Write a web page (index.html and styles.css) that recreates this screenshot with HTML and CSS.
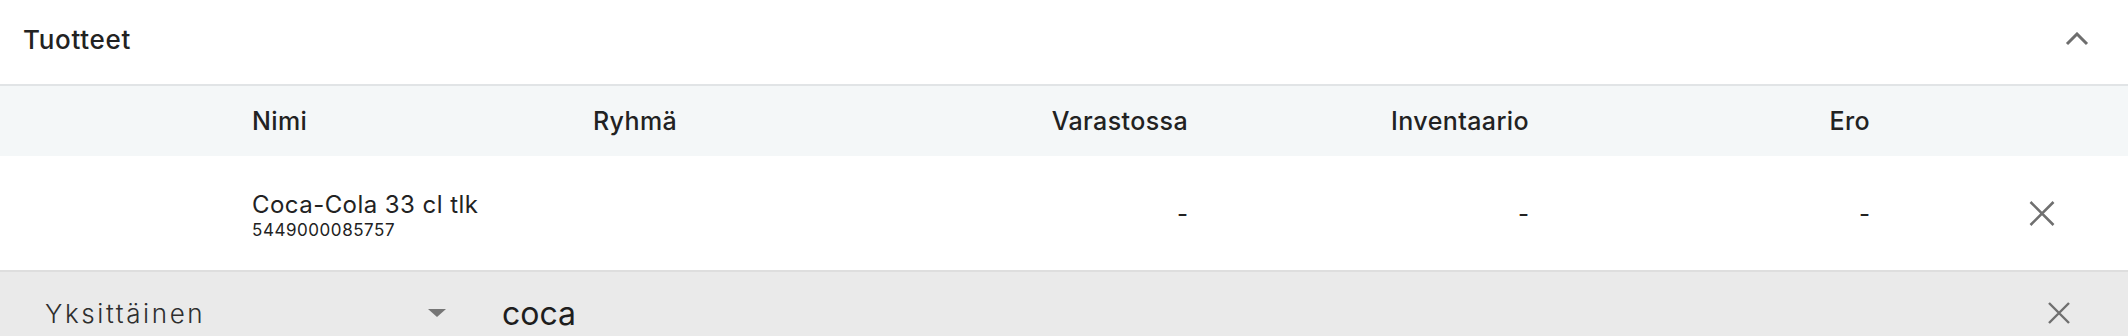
FILE: index.html
```html
<!DOCTYPE html>
<html lang="fi">
<head>
<meta charset="utf-8">
<title>Tuotteet</title>
<link rel="stylesheet" href="styles.css">
</head>
<body>
<div class="panel">
  <div class="panel-head">
    <span class="title">Tuotteet</span>
    <svg class="chev" width="24" height="14" viewBox="0 0 24 14"><polyline points="2,12 12,2 22,12" fill="none" stroke="#6e6e6e" stroke-width="3"/></svg>
  </div>
  <div class="grid thead">
    <div></div>
    <div class="cell">Nimi</div>
    <div class="cell">Ryhmä</div>
    <div class="cell num">Varastossa</div>
    <div class="cell num">Inventaario</div>
    <div class="cell num">Ero</div>
    <div></div>
  </div>
  <div class="grid trow">
    <div></div>
    <div class="cell name">
      <div class="pname">Coca-Cola 33 cl tlk</div>
      <div class="code">5449000085757</div>
    </div>
    <div class="cell"></div>
    <div class="cell num val">-</div>
    <div class="cell num val">-</div>
    <div class="cell num val">-</div>
    <div class="act">
      <svg width="26" height="25" viewBox="0 0 26 25"><path d="M1.5 1 L24.5 24 M24.5 1 L1.5 24" stroke="#6f6f6f" stroke-width="2.6" fill="none"/></svg>
    </div>
  </div>
  <div class="search">
    <div class="select">
      <span class="sel-text">Yksittäinen</span>
      <svg class="tri" width="18" height="8" viewBox="0 0 18 8"><polygon points="0,0 18,0 9,8" fill="#767676"/></svg>
    </div>
    <div class="input">coca</div>
    <svg class="clear" width="22" height="22" viewBox="0 0 22 22"><path d="M1 1 L21 21 M21 1 L1 21" stroke="#6f6f6f" stroke-width="2.4" fill="none"/></svg>
  </div>
</div>
</body>
</html>
```

FILE: styles.css
```css
html, body {
  margin: 0;
  padding: 0;
  background: #ffffff;
}
body {
  font-family: "Inter", "DejaVu Sans", sans-serif;
  color: #222222;
  overflow: hidden;
}
.panel {
  display: flex;
  flex-direction: column;
}
.panel-head {
  height: 84px;
  border-bottom: 2px solid #e1e4e6;
  display: flex;
  align-items: center;
  justify-content: space-between;
  padding: 0 39px 0 23px;
}
.title {
  font-size: 26px;
  font-weight: 500;
  letter-spacing: 0.7px;
  margin-top: -5px;
}
.chev {
  display: block;
  margin-top: -6px;
}
.grid {
  display: grid;
  grid-template-columns: 252px repeat(5, 341px) 1fr;
  align-items: center;
}
.thead {
  height: 70px;
  background: #f4f7f8;
  font-size: 25px;
  font-weight: 500;
  letter-spacing: 0.4px;
}
.cell.num {
  text-align: right;
  padding-right: 87px;
}
.trow {
  height: 114px;
  border-bottom: 2px solid #dedede;
  background: #ffffff;
}
.pname {
  font-size: 24px;
  font-weight: 400;
  line-height: 28px;
  letter-spacing: 0.45px;
}
.code {
  font-size: 17px;
  line-height: 22px;
  letter-spacing: 0.55px;
}
.name {
  margin-top: 5px;
}
.val {
  font-size: 24px;
}
.act {
  display: flex;
  justify-content: center;
  padding-right: 2px;
}
.act svg {
  display: block;
}
.search {
  height: 82px;
  background: #eaeaea;
  display: flex;
  align-items: center;
  padding: 0 58px 0 45px;
}
.select {
  width: 401px;
  display: flex;
  align-items: center;
  justify-content: space-between;
}
.sel-text {
  font-size: 26px;
  font-weight: 300;
  color: #2e2e2e;
  letter-spacing: 2.6px;
}
.tri {
  display: block;
}
.input {
  flex: 1;
  margin-left: 56px;
  font-size: 32px;
  font-weight: 400;
  color: #1e1e1e;
}
.clear {
  display: block;
}
```
